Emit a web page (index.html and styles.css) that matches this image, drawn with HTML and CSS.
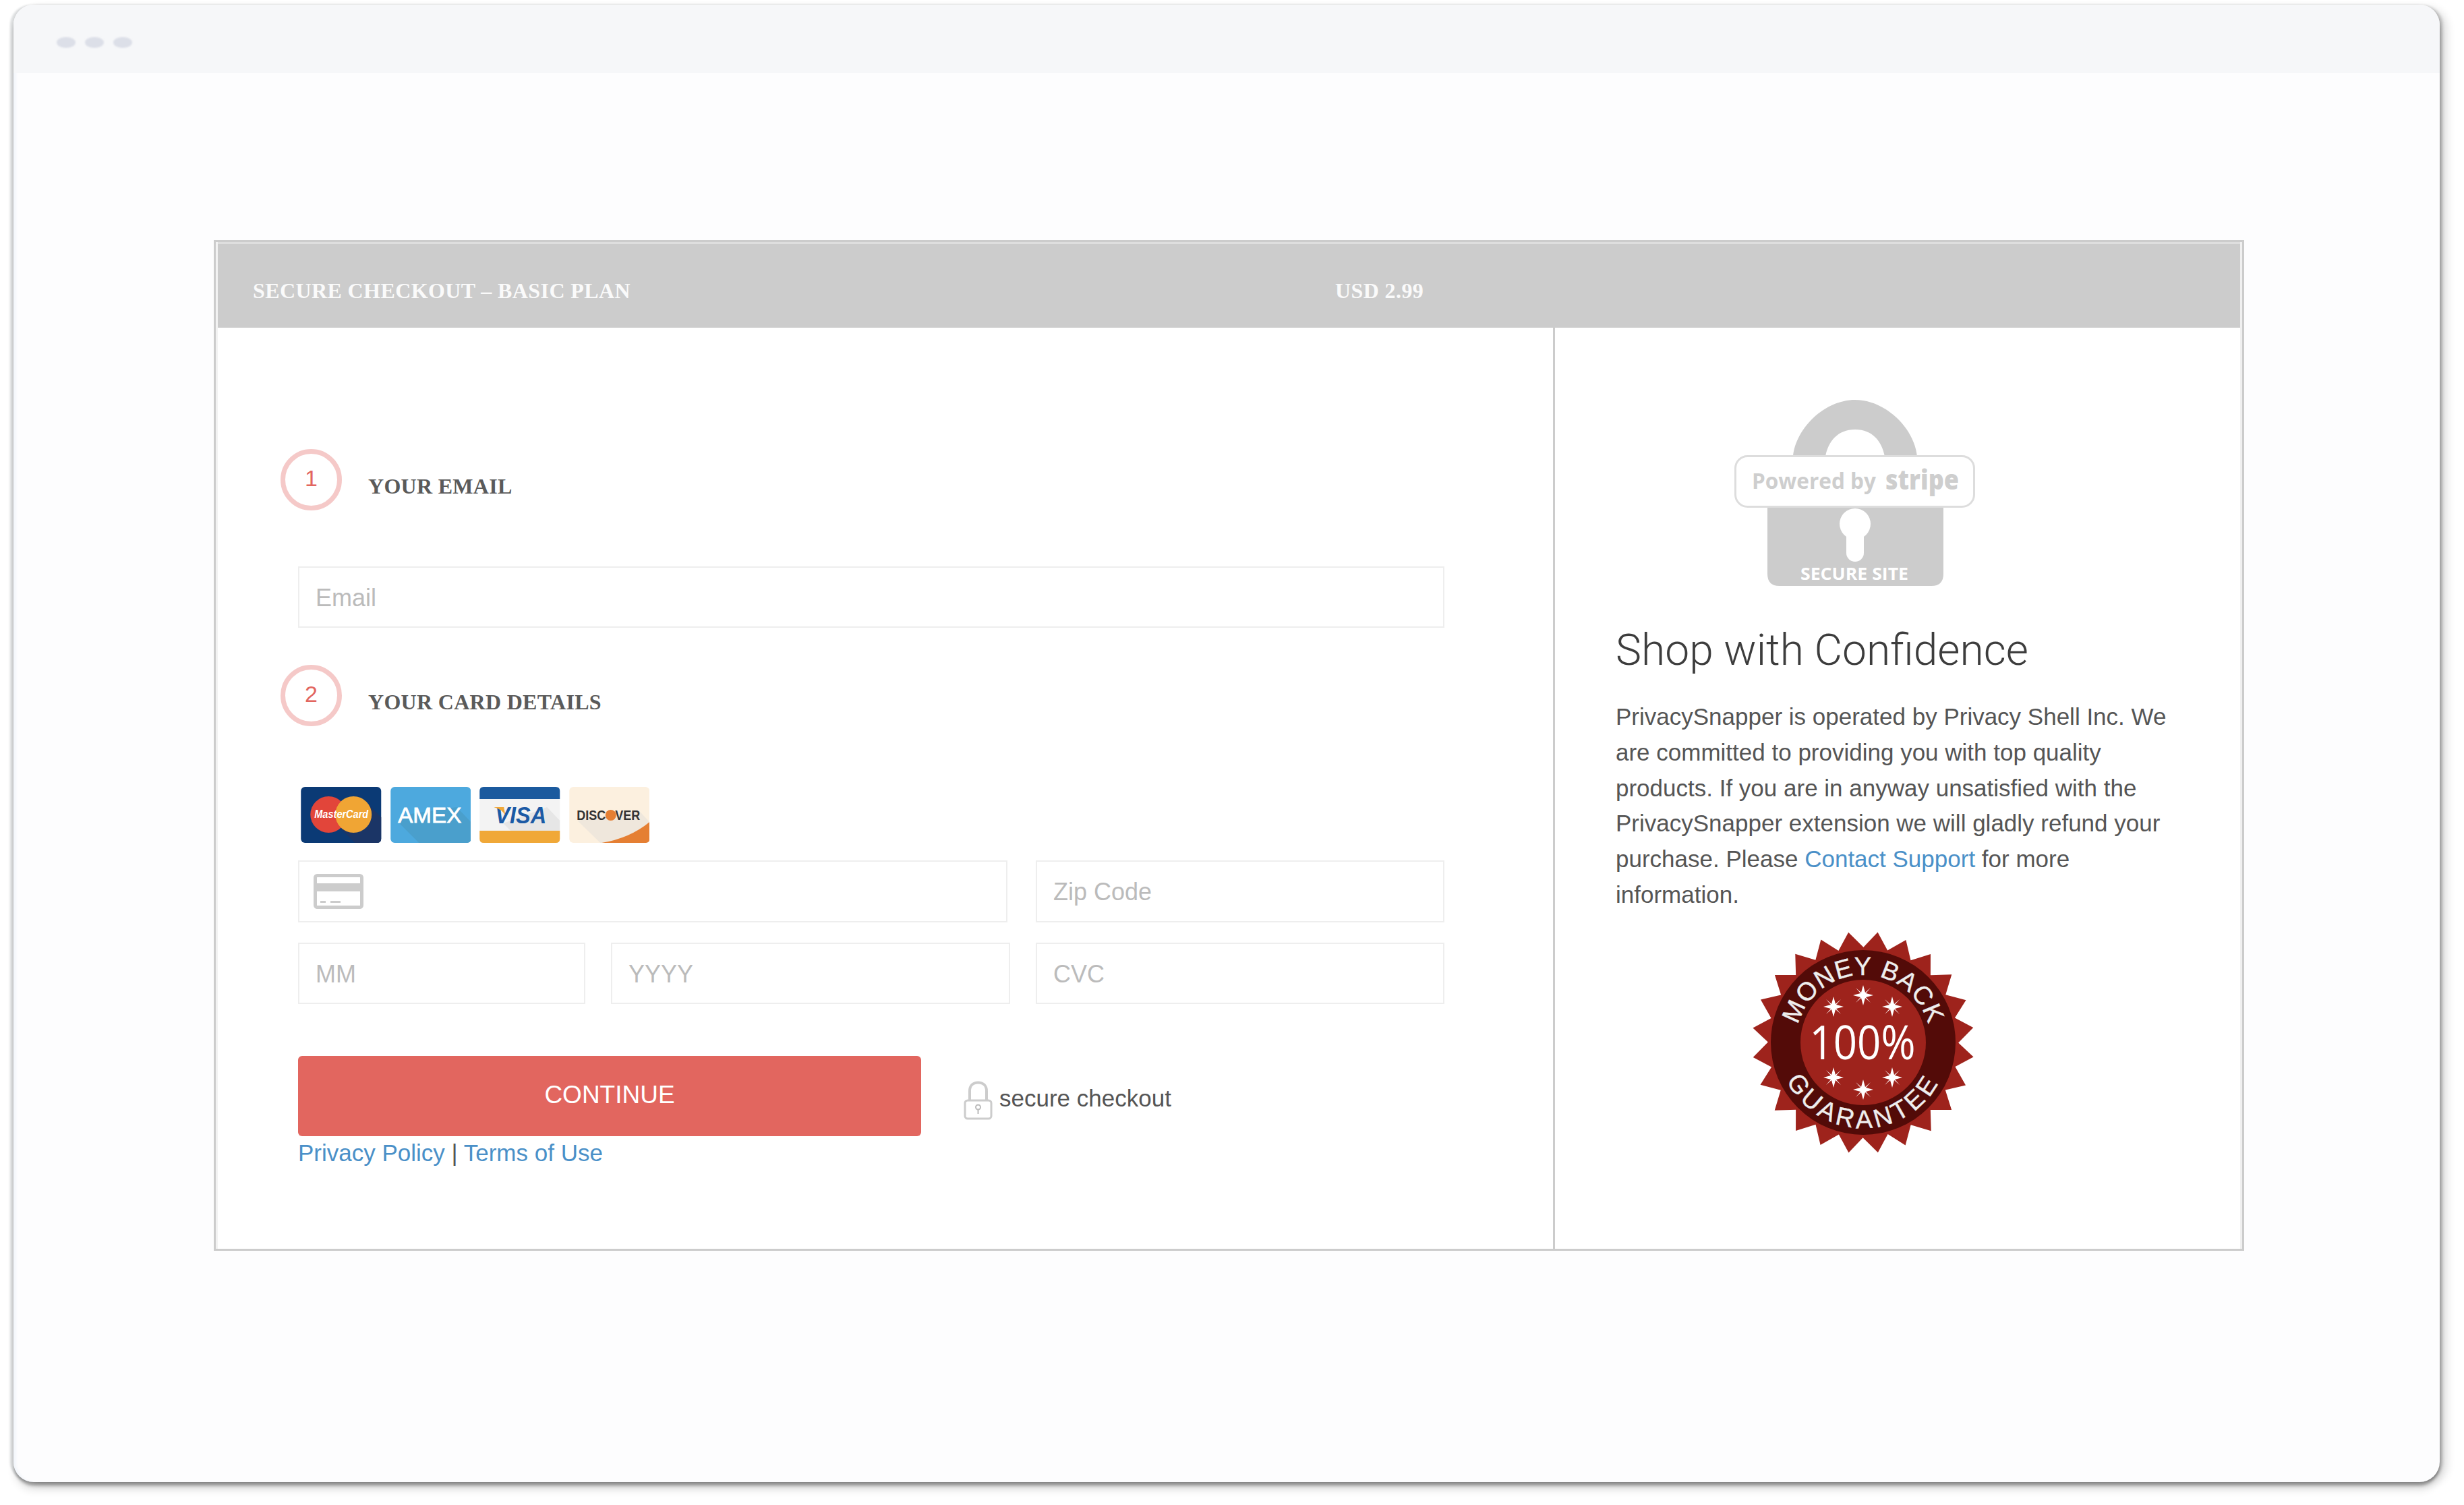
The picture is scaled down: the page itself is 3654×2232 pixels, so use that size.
FILE: index.html
```html
<!DOCTYPE html>
<html lang="en">
<head>
<meta charset="utf-8">
<title>Secure Checkout</title>
<link rel="stylesheet" href="styles.css">
</head>
<body>
<div class="window">
  <div class="topbar"><span class="dot"></span><span class="dot"></span><span class="dot"></span></div>
  <div class="card">
    <div class="card-head">
      <span class="plan">SECURE CHECKOUT – BASIC PLAN</span>
      <span class="price">USD 2.99</span>
    </div>
    <div class="card-body">
      <section class="form-col">
        <div class="step">
          <span class="step-num">1</span>
          <span class="step-label">YOUR EMAIL</span>
        </div>
        <input class="field field-email" placeholder="Email">
        <div class="step step-two">
          <span class="step-num">2</span>
          <span class="step-label">YOUR CARD DETAILS</span>
        </div>
        <div class="brands">
          <svg class="brand" viewBox="0 0 119 83"><rect width="119" height="83" rx="6" fill="#0b3a75"/><path d="M60 63 L80 83 H113 Q119 83 119 77 V45 L98 24Z" fill="#1b3566"/><circle cx="41" cy="41" r="27" fill="#e2453a"/><circle cx="78" cy="41" r="27" fill="#f0a534"/><text class="t-mc" x="60" y="46" text-anchor="middle" textLength="80" lengthAdjust="spacingAndGlyphs">MasterCard</text></svg>
          <svg class="brand" viewBox="0 0 119 83"><rect width="119" height="83" rx="6" fill="#4da9de"/><path d="M12 53 L42 83 H113 Q119 83 119 77 V52 L98 30 L30 40Z" fill="#4a9fcc"/><text class="t-amex" x="58" y="53" text-anchor="middle" textLength="94" lengthAdjust="spacingAndGlyphs">AMEX</text></svg>
          <svg class="brand" viewBox="0 0 119 83"><rect width="119" height="83" rx="6" fill="#f3f3f3"/><path d="M0 18V6Q0 0 6 0H113Q119 0 119 6V18Z" fill="#1b5a9e"/><path d="M0 65H119V77Q119 83 113 83H6Q0 83 0 77Z" fill="#f0a838"/><path d="M35 54 L46 65 H119 V50 L100 30 Z" fill="#e6e6e6"/><text class="t-visa" x="61" y="54" text-anchor="middle" textLength="76" lengthAdjust="spacingAndGlyphs">VISA</text><path d="M21 30 H36 L38 42 Q33 33 21 30Z" fill="#f0a838"/></svg>
          <svg class="brand" viewBox="0 0 119 83"><rect width="119" height="83" rx="6" fill="#fcf0df"/><path d="M12 50 L46 83 H113 L119 52 L104 36 Z" fill="#efe7dc"/><path d="M48 83 Q90 76 119 52 V77 Q119 83 113 83Z" fill="#e57f33"/><text class="t-disc" x="58" y="49" text-anchor="middle" textLength="94" lengthAdjust="spacingAndGlyphs">DISCOVER</text><circle cx="61.500" cy="42" r="8" fill="#e57f33"/></svg>
        </div>
        <div class="row row-top">
          <div class="field card-field">
            <svg class="card-icon" viewBox="0 0 74 52"><rect x="2.500" y="2.500" width="69" height="47" rx="3" fill="#fff" stroke="#ccc" stroke-width="5"/><rect x="3" y="14" width="68" height="12" fill="#ccc"/><rect x="10" y="40" width="8" height="3" fill="#ccc"/><rect x="25" y="40" width="15" height="3" fill="#ccc"/></svg>
          </div>
          <input class="field" placeholder="Zip Code">
        </div>
        <div class="row row-bottom">
          <input class="field" placeholder="MM">
          <input class="field" placeholder="YYYY">
          <input class="field" placeholder="CVC">
        </div>
        <div class="actions">
          <button class="continue">CONTINUE</button>
          <div class="secure">
            <svg class="lock" viewBox="0 0 43 58"><path d="M9 30V15C9 7 14 2.500 21.500 2.500S34 7 34 15V30" fill="none" stroke="#ccc" stroke-width="4"/><rect x="2" y="29" width="39" height="27" rx="4" fill="#fff" stroke="#ccc" stroke-width="3"/><circle cx="21.500" cy="39" r="3.500" fill="none" stroke="#bbb" stroke-width="2"/><path d="M21.500 42V49" stroke="#bbb" stroke-width="2"/></svg>
            <span>secure checkout</span>
          </div>
        </div>
        <p class="legal"><a href="#">Privacy Policy</a> | <a href="#">Terms of Use</a></p>
      </section>
      <aside class="trust-col">
        <svg class="stripe" viewBox="0 0 357 280">
          <path d="M87 87C91 45 134 3 179 3S267 45 271 87H223C219 65 205 47 179 47S139 65 135 87Z" fill="#ccc"/>
          <path d="M49 160H310V261Q310 279 292 279H67Q49 279 49 261Z" fill="#ccc"/>
          <rect x="1.500" y="86.500" width="354" height="75" rx="18" fill="#fff" stroke="#ddd" stroke-width="3"/>
          <circle cx="179" cy="187" r="23" fill="#fff"/>
          <rect x="166" y="187" width="26" height="56" rx="13" fill="#fff"/>
          <text class="t-powered" x="26" y="135" textLength="184" lengthAdjust="spacingAndGlyphs">Powered by</text>
          <text class="t-stripe" x="224" y="136" textLength="109" lengthAdjust="spacingAndGlyphs">stripe</text>
          <text class="t-secure" x="178" y="270" text-anchor="middle" textLength="160" lengthAdjust="spacingAndGlyphs">SECURE SITE</text>
        </svg>
        <h2 class="trust-title">Shop with Confidence</h2>
        <p class="trust-copy">PrivacySnapper is operated by Privacy Shell Inc. We are committed to providing you with top quality products. If you are in anyway unsatisfied with the PrivacySnapper extension we will gladly refund your purchase. Please <a href="#">Contact Support</a> for more information.</p>
        <svg class="seal" viewBox="-170 -170 340 340">
          <polygon fill="#9e231c" points="0,-165 18,-140 43,-159 54,-130 82,-143 86,-112 117,-117 112,-86 143,-82 130,-54 159,-43 140,-18 165,0 140,18 159,43 130,54 143,82 112,86 117,117 86,112 82,143 54,130 43,159 18,140 0,165 -18,140 -43,159 -54,130 -82,143 -86,112 -117,117 -112,86 -143,82 -130,54 -159,43 -140,18 -165,0 -140,-18 -159,-43 -130,-54 -143,-82 -112,-86 -117,-117 -86,-112 -82,-143 -54,-130 -43,-159 -18,-140" transform="rotate(7.500)"/>
          <circle r="137" fill="#530b08"/>
          <circle r="93" fill="#9e231c"/>
          <defs>
            <path id="arc-top" d="M-100 0A100 100 0 0 1 100 0"/>
            <path id="arc-bottom" d="M-127 0A127 127 0 0 0 127 0"/>
            <g id="spark"><path d="M0 -15L3 -4L11 -11L4 -3L15 0L4 3L11 11L3 4L0 15L-3 4L-11 11L-4 3L-15 0L-4 -3L-11 -11L-3 -4Z" fill="#fff"/></g>
          </defs>
          <text class="t-arc t-arc-top"><textPath href="#arc-top" startOffset="50%" text-anchor="middle">MONEY BACK</textPath></text>
          <text class="t-arc t-arc-bottom"><textPath href="#arc-bottom" startOffset="50%" text-anchor="middle">GUARANTEE</textPath></text>
          <text class="t-hundred" x="-1" y="25" text-anchor="middle" textLength="157" lengthAdjust="spacingAndGlyphs">100%</text>
          <use href="#spark" x="0" y="-70"/><use href="#spark" x="-44" y="-53"/><use href="#spark" x="43" y="-53"/>
          <use href="#spark" x="0" y="70"/><use href="#spark" x="-44" y="52"/><use href="#spark" x="43" y="52"/>
        </svg>
      </aside>
    </div>
  </div>
</div>
</body>
</html>
```
FILE: styles.css
```css
* { box-sizing: border-box; }
html, body { margin: 0; padding: 0; background: #fff; }
body { width: 3654px; height: 2232px; overflow: hidden; padding: 7px 36px 34px 20px; font-family: "Liberation Sans", Arial, sans-serif; color: #555; }
.window { height: 2191px; background: #fdfdfe; border-radius: 30px;
  box-shadow: 0 6px 4px -1px rgba(0,0,0,.3), 0 14px 14px -4px rgba(0,0,0,.14), 6px 0 4px -2px rgba(0,0,0,.2), 12px 4px 14px -2px rgba(0,0,0,.14), -6px 0 3px -1px rgba(60,70,80,.18), 0 -2px 3px rgba(0,0,0,.03), inset 5px 0 4px -2px #f0f4fa; }
.topbar { height: 101px; background: #f6f7f9; border-radius: 30px 30px 0 0; display: flex; align-items: center; gap: 14px; padding: 11px 0 0 64px; }
.dot { width: 28px; height: 16px; border-radius: 50%; background: #dcdfe8; filter: blur(1px); }
.card { width: 3011px; height: 1499px; margin: 248px 0 0 297px; border: 3px solid #ccc; box-shadow: inset 3px 0 0 #f2f2f2, inset -3px 0 0 #f0f0f0, inset 0 3px 0 #dedede; padding: 3px 3px 0; display: flex; flex-direction: column; background: #fff; }
.card-head { height: 124px; flex: none; background: #ccc; color: #fafafa; font: bold 32px "Liberation Serif", "Times New Roman", serif; letter-spacing: .4px; display: flex; align-items: center; padding: 14px 0 0 52px; }
.plan { width: 1605px; }
.card-body { flex: 1; display: grid; grid-template-columns: 1983px 1fr; min-height: 0; }
.form-col { padding: 180px 0 0 93px; border-right: 3px solid #ccc; }
.step { display: flex; align-items: center; gap: 39px; height: 91px; }
.step-two { margin-top: 55px; }
.step-num { width: 91px; height: 91px; flex: none; border: 7px solid #f5c9c8; border-radius: 50%; display: flex; align-items: center; justify-content: center; color: #e2665f; font-size: 34px; line-height: 1; padding-bottom: 6px; }
.step-label { font: bold 32px "Liberation Serif", "Times New Roman", serif; letter-spacing: .3px; color: #5a5a5a; padding-top: 20px; }
.field { display: block; height: 91px; border: 2px solid #eee; background: #fff; padding: 2px 24px 0; font: 36px "Liberation Sans", Arial, sans-serif; color: #555; outline: none; border-radius: 0; width: 100%; min-width: 0; }
.field::placeholder { color: #bbb; opacity: 1; }
.field-email { width: 1700px; margin: 83px 0 0 26px; }
.brands { display: flex; gap: 13px; margin: 90px 0 0 30px; height: 83px; }
.brand { width: 119.500px; height: 83px; display: block; }
.row { display: grid; margin-left: 26px; width: 1700px; }
.row-top { grid-template-columns: 1052px 606px; column-gap: 42px; margin-top: 26px; }
.row-bottom { grid-template-columns: 426px 592px 606px; column-gap: 38px; margin-top: 30px; }
.row-top .field { height: 92px; }
.card-field { display: flex; align-items: center; padding: 0 0 0 21px; }
.card-icon { width: 74px; height: 52px; display: block; }
.actions { display: flex; align-items: center; margin: 77px 0 0 26px; height: 119px; }
.continue { width: 924px; height: 119px; border: 0; border-radius: 6px; background: #e2665f; color: #fff; font: 37px "Liberation Sans", Arial, sans-serif; padding: 0 0 4px; }
.secure { display: flex; align-items: center; gap: 10px; margin: 12px 0 0 63px; font-size: 35px; color: #555; }
.lock { width: 43px; height: 58px; display: block; flex: none; }
.secure span { position: relative; top: -3px; }
.legal { margin: 4px 0 0 26px; font-size: 35px; line-height: 42px; color: #555; }
a { color: #4a90c8; text-decoration: none; }
.trust-col { padding: 104px 0 0 90px; }
.stripe { width: 357px; height: 280px; display: block; margin-left: 176px; }
.t-powered, .t-stripe { fill: #cecece; font: bold 33px "Open Sans", sans-serif; }
.t-stripe { font-size: 40px; font-weight: 800; }
.t-secure { fill: #fff; font: bold 25px "Open Sans", sans-serif; }
.trust-title { margin: 57px 0 0; font: 300 64.100px/76px Roboto, "Liberation Sans", sans-serif; color: #3d3d3d; }
.trust-copy { margin: 34px 0 0; font-size: 35px; line-height: 52.800px; color: #555; width: 830px; }
.seal { width: 340px; height: 340px; display: block; margin: 22px 0 0 197px; }
.t-arc { fill: #eee; font: 38px "Liberation Sans", Arial, sans-serif; stroke: #eee; stroke-width: .4px; }
.t-arc-top { letter-spacing: .8px; }
.t-arc-bottom { letter-spacing: 5px; }
.t-hundred { fill: #fff; font: 70px "Open Sans", sans-serif; }
.t-mc { fill: #fff; font: italic bold 16px "Liberation Sans", sans-serif; }
.t-amex { fill: #fff; font: 32px "Liberation Sans", sans-serif; stroke: #fff; stroke-width: .8px; }
.t-visa { fill: #1b5aa5; font: italic bold 35px "Liberation Sans", sans-serif; }
.t-disc { fill: #333; font: bold 20px "Liberation Sans", sans-serif; }
```
